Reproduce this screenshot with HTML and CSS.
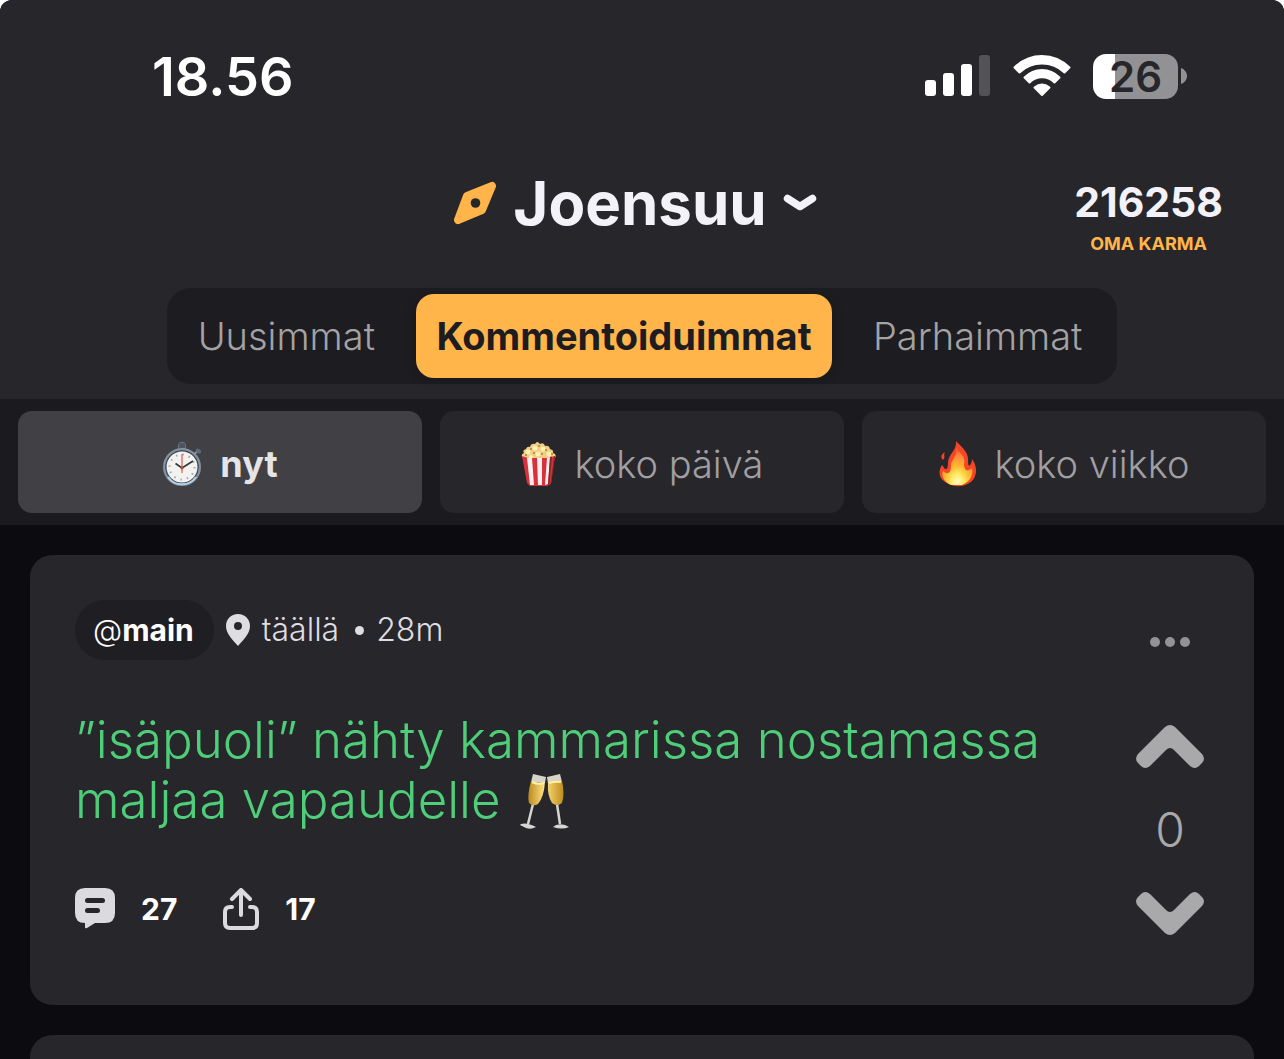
FILE: index.html
```html
<!DOCTYPE html>
<html lang="fi">
<head>
<meta charset="utf-8">
<meta name="viewport" content="width=device-width, initial-scale=1">
<title>Joensuu</title>
<link rel="stylesheet" href="styles.css">
</head>
<body>
<div class="screen">
  <header class="header">
    <div class="status">
      <time class="clock">18.56</time>
      <div class="indicators">
        <svg class="signal" width="66" height="42" viewBox="0 0 66 42" aria-hidden="true">
          <g fill="#fff"><rect x="0" y="25" width="11" height="16" rx="3"/><rect x="18" y="18" width="11" height="23" rx="3"/><rect x="36" y="9" width="11" height="32" rx="3"/></g>
          <rect x="54" y="0" width="11" height="41" rx="3" fill="#535257"/>
        </svg>
        <svg class="wifi" width="58" height="44" viewBox="0 0 58 44" aria-hidden="true">
          <g fill="#fff" stroke="#fff" stroke-width="2" stroke-linejoin="round">
            <path d="M1.500 13.500C17-2 41-2 56.500 13.500L51.500 18.500C39 6.500 19 6.500 6.500 18.500Z"/>
            <path d="M11.500 23.500C21.500 13.500 36.500 13.500 46.500 23.500L41.500 28.500C34.500 21.500 23.500 21.500 16.500 28.500Z"/>
            <path d="M21.500 33.500Q29 27.500 36.500 33.500L29 41Z"/>
          </g>
        </svg>
        <div class="battery"><span class="battery-level">26</span><svg width="6" height="16" viewBox="0 0 6 16" aria-hidden="true"><path d="M0 0C3 1 6 4 6 8s-3 7-6 8Z" fill="#929194"/></svg></div>
      </div>
    </div>
    <div class="titlebar">
      <button class="place" type="button">
        <svg width="44" height="44" viewBox="0 0 44 44" aria-hidden="true"><path d="M5 39L14 15L39 5L29 29Z" fill="#ffb54a" stroke="#ffb54a" stroke-width="8" stroke-linejoin="round"/><circle cx="22.500" cy="22" r="4.800" fill="#27262b"/></svg>
        <span class="place-name">Joensuu</span>
        <svg width="34" height="22" viewBox="0 0 34 22" aria-hidden="true"><path d="M4.500 6.500L17 14.500L29.500 6.500" fill="none" stroke="#f3f2f8" stroke-width="7.500" stroke-linecap="round" stroke-linejoin="round"/></svg>
      </button>
      <div class="karma"><strong class="karma-value">216258</strong><span class="karma-label">OMA KARMA</span></div>
    </div>
    <nav class="tabs">
      <button class="tab tab-first" type="button">Uusimmat</button>
      <button class="tab tab-active" type="button">Kommentoiduimmat</button>
      <button class="tab tab-last" type="button">Parhaimmat</button>
    </nav>
  </header>
  <nav class="filters">
    <button class="filter filter-active" type="button">
      <svg width="42" height="48" viewBox="0 0 42 48" aria-hidden="true">
        <circle cx="20" cy="6" r="3.500" fill="none" stroke="#66717d" stroke-width="1.500"/><rect x="17.500" y="3" width="5" height="6" rx="1" fill="#4c5661"/>
        <path d="M32 14L36 11" stroke="#8494a6" stroke-width="2"/><ellipse cx="36.500" cy="11" rx="3" ry="2" fill="#5c6a78" transform="rotate(35 36.500 11)"/>
        <circle cx="20" cy="27" r="18" fill="#dfe2e5" stroke="#8292a0" stroke-width="2"/><circle cx="20" cy="27" r="16.200" fill="#f2f2f1" stroke="#414b57" stroke-width="1.500"/>
        <path d="M6 37A17 17 0 0 0 34 37" fill="none" stroke="#b7d0e6" stroke-width="2"/>
        <circle cx="20" cy="27" r="12.500" fill="none" stroke="#a2a4a6" stroke-width="2" stroke-dasharray="1.500 5.045"/>
        <path d="M20 33V14" stroke="#e2593d" stroke-width="1.200"/><path d="M13.500 23.500L20 28L31 21" fill="none" stroke="#30383e" stroke-width="1.600"/><circle cx="20" cy="28" r="1.500" fill="#bd4d38"/>
      </svg><span>nyt</span>
    </button>
    <button class="filter" type="button">
      <svg width="36" height="48" viewBox="0 0 36 48" aria-hidden="true">
        <path d="M1 17Q0 14 3 13Q1 10 5 9Q6 6 9 7Q10 3 14 4Q16 0 19 4Q23 2 24 6Q28 5 29 9Q33 10 32 13Q36 14 34 18L27 21H6Z" fill="#efd083"/>
        <g fill="#fff0b8"><circle cx="7" cy="12" r="2.500"/><circle cx="14" cy="8" r="2.500"/><circle cx="22" cy="9" r="2.500"/><circle cx="28" cy="14" r="2.500"/><circle cx="17" cy="14" r="2.500"/><circle cx="10" cy="17" r="2"/></g>
        <g fill="#b87832"><circle cx="10" cy="9" r="1"/><circle cx="18" cy="6" r="1"/><circle cx="25" cy="10" r="1"/><circle cx="21" cy="14" r="1"/><circle cx="13" cy="13" r="1"/><circle cx="31" cy="14" r="1"/><circle cx="5" cy="15" r="1"/></g>
        <path d="M1 16L7 18H26L34 16L30 44L26 46H9L6 43Z" fill="#d9313c"/>
        <path d="M6 18H11L13 45H9ZM16 18H21V45H17ZM26 18L29 17L27 44L24 45Z" fill="#faf0f0"/><path d="M29 17L31 16.500L28.500 44L27 45ZM33 16L34 16L30 44L29.500 44.500Z" fill="#8b2420"/>
      </svg><span>koko päivä</span>
    </button>
    <button class="filter" type="button">
      <svg width="38" height="48" viewBox="0 0 38 48" aria-hidden="true">
        <defs><radialGradient id="flame" cx="50%" cy="91%" r="88%"><stop offset="0" stop-color="#fff9cc"/><stop offset=".22" stop-color="#ffed67"/><stop offset=".5" stop-color="#ffb52d"/><stop offset=".78" stop-color="#ff8a3d"/><stop offset="1" stop-color="#fb5a30"/></radialGradient></defs>
        <path d="M17 1C21 6 30 11 29 21Q29 25 30 26Q33 24 33 19C40 28 38 42 26 45Q18 48 10 44C-1 40-1 31 3 25L6 29Q9 30 9 23C9 14 18 11 17 1ZM6 12C1 15 2 18 4 20C7 17 4 15 6 12Z" fill="#f34626"/>
        <path d="M17 8C21 14 27 15 25 25Q26 34 33 28C35 36 30 42 23 45H12C5 42 2 36 4 31Q11 37 12 27C11 20 19 17 17 8Z" fill="url(#flame)"/>
      </svg><span>koko viikko</span>
    </button>
  </nav>
  <main class="feed">
    <article class="card">
      <div class="post">
        <div class="meta">
          <a class="channel" href="#main"><span class="at">@</span>main</a>
          <svg class="pin" width="24" height="32" viewBox="0 0 24 32" aria-hidden="true"><path fill-rule="evenodd" d="M12 0C5 0 0 5 0 12C0 20 7 26 12 32C17 26 24 20 24 12C24 5 19 0 12 0ZM12 8a4 4 0 1 1 0 8 4 4 0 0 1 0-8Z" fill="#dedde0"/></svg>
          <span class="where">täällä</span><span class="dot" aria-hidden="true"></span><span>28m</span>
        </div>
        <p class="message">”isäpuoli” nähty kammarissa nostamassa<br>maljaa vapaudelle
          <svg class="toast" width="50" height="56" viewBox="0 0 50 56" role="img" aria-label="🥂">
            <defs><linearGradient id="wine" x1="0" x2="1"><stop stop-color="#b98a20"/><stop offset=".45" stop-color="#ffe181"/><stop offset="1" stop-color="#c08c1c"/></linearGradient></defs>
            <path d="M14 30L9 50M38 30L41 50" stroke="#d7d5d1" stroke-width="2.500"/>
            <path d="M2 50Q8 48 17 53Q12 56 7 54L1 51ZM34 53Q38 49 46 51L50 53Q43 56 34 53Z" fill="#d8d6d4"/>
            <path d="M14 0L27 3L26 9L12 8ZM28 3L41 0L43 8L29 10Z" fill="#d7d3c9"/>
            <path d="M12 7Q18 10 26 8Q25 23 19 30Q14 33 10 29Q8 22 12 7ZM29 9Q37 6 43 7Q46 20 43 29Q38 33 33 29Q28 21 29 9Z" fill="url(#wine)"/>
            <path d="M13 8Q19 11 25 9M30 9Q37 7 42 8" fill="none" stroke="#fff2a0" stroke-width="2"/>
          </svg>
        </p>
        <div class="actions">
          <button class="action comments" type="button" aria-label="27 kommenttia">
            <svg width="40" height="42" viewBox="0 0 40 42" aria-hidden="true"><path d="M10 0H30Q40 0 40 10V25Q40 35 30 35H20L12 40Q10 41 10 39V35Q0 35 0 25V10Q0 0 10 0Z" fill="#dbdade"/><path d="M12.500 12.500H27.500M12.500 22.500H22.500" stroke="#27262b" stroke-width="5" stroke-linecap="round"/></svg>
            <span>27</span>
          </button>
          <button class="action" type="button" aria-label="Jaa, 17">
            <svg width="36" height="42" viewBox="0 0 36 42" aria-hidden="true"><g fill="none" stroke="#dbdade" stroke-width="4" stroke-linecap="round" stroke-linejoin="round"><path d="M9 19H7Q2 19 2 24V35Q2 40 7 40H29Q34 40 34 35V24Q34 19 29 19H27M18 27V2M9 11L18 2L27 11"/></g></svg>
            <span>17</span>
          </button>
        </div>
      </div>
      <div class="votes">
        <button class="more" type="button" aria-label="Lisää"><svg width="40" height="10" viewBox="0 0 40 10" aria-hidden="true"><g fill="#939296"><circle cx="5" cy="5" r="5"/><circle cx="20" cy="5" r="5"/><circle cx="35" cy="5" r="5"/></g></svg></button>
        <button class="vote" type="button" aria-label="Ylös"><svg width="68" height="44" viewBox="0 0 68 44" aria-hidden="true"><path id="arrow" d="M29 2Q34-2 39 2L66 29Q70 34 66 38L63 41Q59 45 54 41L38 25Q34 21 30 25L14 41Q9 45 5 41L2 38Q-2 34 2 29Z" fill="#a9a8aa"/></svg></button>
        <output class="score">0</output>
        <button class="vote" type="button" aria-label="Alas"><svg width="68" height="44" viewBox="0 0 68 44" aria-hidden="true"><use href="#arrow" transform="rotate(180 34 22)"/></svg></button>
      </div>
    </article>
    <article class="card card-next"></article>
  </main>
</div>
</body>
</html>
```
FILE: styles.css
```css
* { box-sizing: border-box; }
html { background: #fff; }
body { margin: 0; font-family: Inter, "Noto Sans", sans-serif; color: #fff; }
button { border: 0; margin: 0; padding: 0; background: none; color: inherit; font: inherit; }
svg { display: block; flex: none; }
.screen { height: 100vh; overflow: hidden; display: flex; flex-direction: column; border-radius: 12px 12px 0 0; background: #0c0b10; }
.header { flex: none; background: #27262b; padding-bottom: 15px; }

.status { display: flex; justify-content: space-between; align-items: center; padding: 46px 97px 0 152px; height: 106px; }
.clock { font-size: 54px; line-height: 60px; font-weight: 600; padding-top: 2px; }
.indicators { display: flex; align-items: center; gap: 22px; }
.battery { display: flex; align-items: center; gap: 3px; }
.battery-level { width: 85px; height: 45px; border-radius: 13px; background: linear-gradient(90deg, #fff 26%, #929194 26%); color: #27262b; font-size: 42px; line-height: 45px; font-weight: 600; text-align: center; }

.titlebar { display: grid; grid-template-columns: 1fr auto 1fr; align-items: center; height: 182px; padding: 12px 61px 0; }
.place { grid-column: 2; display: flex; align-items: center; gap: 16px; padding-right: 14px; color: #f3f2f8; }
.place-name { font-size: 60px; line-height: 72px; font-weight: 700; }
.karma { justify-self: end; display: flex; flex-direction: column; align-items: center; gap: 6px; padding-top: 28px; }
.karma-value { font-size: 41px; line-height: 48px; font-weight: 700; color: #f3f2f8; }
.karma-label { font-size: 18px; line-height: 24px; font-weight: 700; color: #ffb54a; }

.tabs { display: grid; grid-template-columns: 243fr 417fr 279fr; width: 74%; height: 96px; margin: 0 auto; padding: 6px; border-radius: 24px; background: #1d1c20; }
.tab { border-radius: 18px; color: #a3a2a5; font-size: 38px; font-weight: 300; }
.tab-first { padding-right: 16px; }
.tab-last { padding-left: 12px; }
.tab-active { background: #ffb54a; color: #1d1c20; font-weight: 700; box-shadow: 0 2px 12px #0003; }

.filters { flex: none; display: grid; grid-template-columns: repeat(3, 1fr); gap: 18px; padding: 12px 18px; background: #1b1a1e; }
.filter { display: flex; align-items: center; justify-content: center; gap: 18px; height: 102px; padding-top: 4px; border-radius: 14px; background: #27262b; color: #a09fa2; font-size: 38px; font-weight: 300; }
.filter-active { gap: 16px; background: #414044; color: #e5e4e7; font-size: 36px; font-weight: 700; }

.feed { display: flex; flex-direction: column; gap: 30px; padding: 30px; }
.card { flex: none; display: flex; justify-content: space-between; padding: 45px; border-radius: 22px; background: #27262b; }
.card-next { min-height: 450px; }
.post { min-width: 0; padding-bottom: 30px; }
.meta { display: flex; align-items: center; gap: 12px; font-size: 32px; line-height: 36px; font-weight: 300; color: #dedde0; }
.channel { padding: 12px 20px 12px 18px; border-radius: 30px; background: #1f1e22; color: #fff; font-size: 30px; font-weight: 700; text-decoration: none; }
.at { font-weight: 300; }
.where { margin-right: 4px; }
.dot { width: 9px; height: 9px; border-radius: 50%; background: #dedde0; }
.message { margin: 50px 0 0; font-size: 51px; line-height: 60px; font-weight: 300; color: #4fce7a; }
.toast { display: inline-block; vertical-align: -12px; margin-left: 4px; }
.actions { display: flex; gap: 46px; margin-top: 58px; }
.action { display: flex; align-items: center; gap: 26px; font-size: 30px; line-height: 42px; font-weight: 700; }

.votes { flex: none; display: flex; flex-direction: column; align-items: center; width: 78px; }
.more { margin-top: 37px; }
.vote { flex: none; }
.more + .vote { margin-top: 78px; }
.score { margin: 30px 0; font-size: 48px; line-height: 62px; font-weight: 300; color: #a9a8aa; }
```
